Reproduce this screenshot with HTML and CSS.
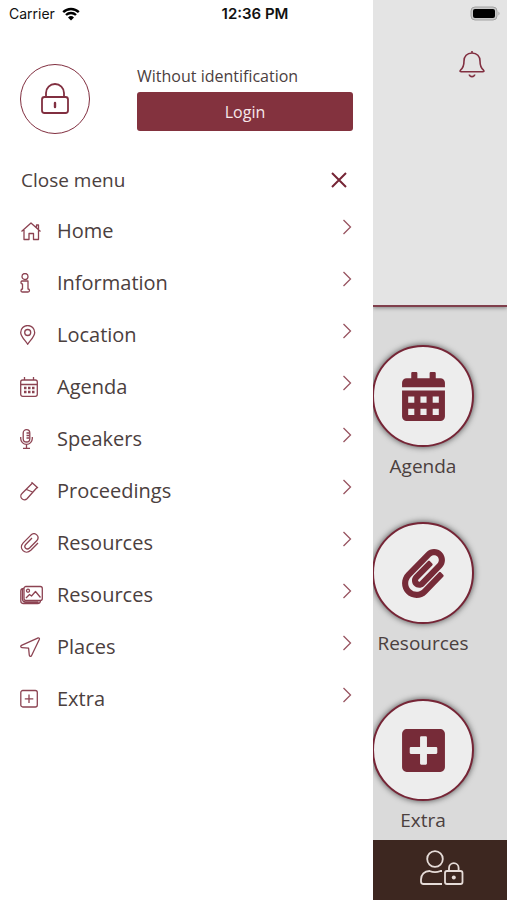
FILE: index.html
```html
<!DOCTYPE html>
<html lang="en">
<head>
<meta charset="utf-8">
<meta name="viewport" content="width=device-width, initial-scale=1">
<title>Menu</title>
<link rel="stylesheet" href="styles.css">
</head>
<body>
<svg class="sprite" aria-hidden="true">
  <symbol id="chevron" viewBox="0 0 10 16"><path d="M1.5 1 8.5 8l-7 7"/></symbol>
</svg>
<div class="screen">
  <header class="status">
    <div class="status-carrier">
      <span>Carrier</span>
      <svg width="18" height="14" viewBox="0 0 18 14" aria-hidden="true">
        <path class="wifi-arc" d="M1.2 5.1a11.2 11.2 0 0 1 15.6 0M4 8a7.2 7.2 0 0 1 10 0"/>
        <path d="M9 13.6 6 10.5a4.3 4.3 0 0 1 6 0z"/>
      </svg>
    </div>
    <time class="status-time">12:36 PM</time>
    <svg class="battery" width="31" height="16" viewBox="0 0 31 16" aria-hidden="true">
      <rect class="battery-case" x="1" y="1" width="26" height="13" rx="4"/>
      <rect x="3" y="3" width="22" height="9" rx="2"/>
      <path class="battery-tip" d="M28.5 5.5q2 2 0 4z"/>
    </svg>
  </header>

  <aside class="drawer">
    <section class="account">
      <span class="avatar">
        <svg width="30" height="34" viewBox="0 0 30 34" aria-hidden="true">
          <rect x="2" y="15" width="26" height="16" rx="2.5"/>
          <path d="M6 15v-4a9 9 0 0 1 18 0v4"/>
          <path class="keyhole" d="M15 21v4"/>
        </svg>
      </span>
      <div class="account-body">
        <p>Without identification</p>
        <button class="login" type="button">Login</button>
      </div>
    </section>

    <button class="close" type="button">
      <span>Close menu</span>
      <svg width="16" height="16" viewBox="0 0 16 16" aria-hidden="true"><path d="m1 1 14 14M15 1 1 15"/></svg>
    </button>

    <nav>
      <ul class="menu">
        <li><a href="#home">
          <svg class="icon" viewBox="0 0 24 20" aria-hidden="true"><path d="M1.500 10.500 11 2l9.500 8.500M16.500 6.800V4h2v4.800M4 9v9.500h5v-6h4.500v6h5V9"/></svg>
          <span>Home</span><svg class="chevron"><use href="#chevron"/></svg></a></li>
        <li><a href="#information">
          <svg class="icon" viewBox="0 0 24 20" aria-hidden="true"><circle cx="5" cy="3.500" r="3"/><path d="M2 8h6v8q1.500 0 1.500 1.500T8 19H2.500Q1 19 1 17.500T2.500 16v-5Q1 11 1 9.500T2 8z"/></svg>
          <span>Information</span><svg class="chevron"><use href="#chevron"/></svg></a></li>
        <li><a href="#location">
          <svg class="icon" viewBox="0 0 24 20" aria-hidden="true"><path d="M7.700 19.300C6 16 .7 12 .7 7.500a7 7 0 0 1 14 0C14.700 12 9.400 16 7.700 19.300z"/><circle cx="7.700" cy="7.500" r="3"/></svg>
          <span>Location</span><svg class="chevron"><use href="#chevron"/></svg></a></li>
        <li><a href="#agenda">
          <svg class="icon" viewBox="0 0 24 20" aria-hidden="true"><rect x=".7" y="3" width="16.600" height="16.300" rx="2"/><path d="M.7 7.500h16.600M4.500 0v3M13.500 0v3"/><path class="dots" d="M4 11h2.500M8 11h2.500M12 11h2.500M4 15h2.500M8 15h2.500M12 15h2.500"/></svg>
          <span>Agenda</span><svg class="chevron"><use href="#chevron"/></svg></a></li>
        <li><a href="#speakers">
          <svg class="icon" viewBox="0 0 24 20" aria-hidden="true"><rect x="3.200" y=".7" width="6.600" height="12.300" rx="3.300"/><path d="M.7 8v1.500a5.800 5.800 0 0 0 11.600 0V8M6.500 15.500v3.800M3 19.300h7M6.500 4h3M6.500 6.500h3M6.500 9h3"/></svg>
          <span>Speakers</span><svg class="chevron"><use href="#chevron"/></svg></a></li>
        <li><a href="#proceedings">
          <svg class="icon" viewBox="0 0 24 20" aria-hidden="true"><path d="m11.500 1.200 6.500 5.800M12.500 2 2 12.500a3.600 3.600 0 0 0 5 5.300L17 6.500M6.500 8.500l6 2.500"/></svg>
          <span>Proceedings</span><svg class="chevron"><use href="#chevron"/></svg></a></li>
        <li><a href="#resources">
          <svg class="icon" viewBox="0 0 24 20" aria-hidden="true"><path d="m18 10-7.200 7.300c-5.400 5.200-12.800-1.800-7.600-7.400l7.700-7.800c4-3.700 9.600 1.200 5.800 5.700L9.500 15c-2.800 2.600-6.200-.8-3.800-3.500L12 5"/></svg>
          <span>Resources</span><svg class="chevron"><use href="#chevron"/></svg></a></li>
        <li><a href="#gallery">
          <svg class="icon" viewBox="0 0 24 20" aria-hidden="true"><rect x="4" y="1.500" width="18.300" height="14" rx="2"/><path d="M4 3.500Q.8 3.500.8 6v10q0 2.500 2.700 2.500h14q3 0 3-3M2.500 4v10q0 3 3 3h13M6 13l3.500-3.500 2 1.500L15.500 6.500l5 6"/><circle cx="8" cy="5.700" r="1.500"/></svg>
          <span>Resources</span><svg class="chevron"><use href="#chevron"/></svg></a></li>
        <li><a href="#places">
          <svg class="icon" viewBox="0 0 24 20" aria-hidden="true"><path d="M18.200.9 1.500 8.400c-1.200.6-.9 2.200.4 2.300l6.700.5.700 7c.2 1.300 1.800 1.500 2.300.3L19.400 2.200q.2-1.400-1.200-1.300z"/></svg>
          <span>Places</span><svg class="chevron"><use href="#chevron"/></svg></a></li>
        <li><a href="#extra">
          <svg class="icon" viewBox="0 0 24 20" aria-hidden="true"><rect x=".8" y="1.500" width="16.500" height="16.500" rx="2"/><path d="M9 5.500v8.500M4.800 9.800h8.500"/></svg>
          <span>Extra</span><svg class="chevron"><use href="#chevron"/></svg></a></li>
      </ul>
    </nav>
  </aside>

  <main class="app">
    <div class="hero">
      <button class="bell" type="button" aria-label="Notifications">
        <svg width="26" height="28" viewBox="0 0 26 28" aria-hidden="true"><path d="M13 1v2M13 3c-5 0-8 3.500-8 8 0 5-1.500 7.500-3.500 9.200-.9.900-.4 1.500.8 1.500h21.400c1.200 0 1.700-.6.800-1.500C22.500 18.500 21 16 21 11c0-4.500-3-8-8-8zM10.300 24.500c.3 2.800 5.100 2.800 5.400 0"/></svg>
      </button>
    </div>
    <div class="tiles">
      <a class="tile" href="#agenda">
        <span class="disc"><svg viewBox="0 0 448 512" aria-hidden="true"><path fill-rule="evenodd" d="M0 192h448v272a48 48 0 0 1-48 48H48a48 48 0 0 1-48-48zM64 256v64h64v-64zm128 0v64h64v-64zm128 0v64h64v-64zM64 384v64h64v-64zm128 0v64h64v-64zm128 0v64h64v-64z"/><path d="M448 160H0v-48a48 48 0 0 1 48-48h48V12a12 12 0 0 1 12-12h40a12 12 0 0 1 12 12v52h128V12a12 12 0 0 1 12-12h40a12 12 0 0 1 12 12v52h48a48 48 0 0 1 48 48z"/></svg></span>
        <span>Agenda</span>
      </a>
      <a class="tile" href="#resources">
        <span class="disc"><svg viewBox="0 0 448 512" aria-hidden="true"><path d="M43.246 466.142c-58.43-60.289-57.341-157.511 1.386-217.581L254.392 34c44.316-45.332 116.351-45.336 160.671 0 43.89 44.894 43.943 117.329 0 162.276L232.214 383.128c-29.855 30.537-78.633 30.111-107.982-.998-28.275-29.97-27.368-77.473 1.452-106.953l143.743-146.835c6.182-6.314 16.312-6.422 22.626-.241l22.861 22.379c6.315 6.182 6.422 16.312.241 22.626L171.427 319.927c-4.932 5.045-5.236 13.428-.648 18.292 4.372 4.634 11.245 4.711 15.688.165l182.849-186.851c19.613-20.062 19.613-52.725-.011-72.798-19.189-19.627-49.957-19.637-69.154 0L90.39 293.295c-34.763 35.56-35.299 93.12-1.191 128.313 34.01 35.093 88.985 35.137 123.058.286l172.06-175.999c6.177-6.319 16.307-6.433 22.626-.256l22.877 22.364c6.319 6.177 6.434 16.307.256 22.626l-172.06 175.998c-59.576 60.938-155.943 60.216-214.77-.485z"/></svg></span>
        <span>Resources</span>
      </a>
      <a class="tile" href="#extra">
        <span class="disc"><svg viewBox="0 0 448 512" aria-hidden="true"><path fill-rule="evenodd" d="M48 32h352a48 48 0 0 1 48 48v352a48 48 0 0 1-48 48H48a48 48 0 0 1-48-48V80a48 48 0 0 1 48-48zM200 108a12 12 0 0 0-12 12v100H92a12 12 0 0 0-12 12v48a12 12 0 0 0 12 12h96v100a12 12 0 0 0 12 12h48a12 12 0 0 0 12-12V292h96a12 12 0 0 0 12-12v-48a12 12 0 0 0-12-12h-96V120a12 12 0 0 0-12-12z"/></svg></span>
        <span>Extra</span>
      </a>
    </div>
    <footer class="tabbar">
      <button type="button" aria-label="Account">
        <svg width="44" height="36" viewBox="0 0 44 36" aria-hidden="true"><circle cx="15" cy="9" r="7.800"/><path d="M22 34H3.500Q1 34 1 31.500v-2C1 24.500 4.500 21 9.500 21c3 1.300 8 1.300 11 0h1.500"/><rect x="25" y="21" width="17.500" height="13" rx="2"/><path d="M29 21v-3a4.800 4.800 0 0 1 9.600 0v3"/><circle class="lock-dot" cx="33.800" cy="27.500" r="2"/></svg>
      </button>
    </footer>
  </main>
</div>
</body>
</html>
```
FILE: styles.css
```css
:root {
  --wine: #812f40;
  --wine-dark: #762536;
  --ink: #4b403e;
}

* {
  box-sizing: border-box;
}

body {
  margin: 0;
  color: var(--ink);
  font-family: "Open Sans", "Noto Sans", sans-serif;
  font-size: 19px;
  line-height: 28px;
}

button {
  border: 0;
  padding: 0;
  background: none;
  color: inherit;
  font: inherit;
  cursor: pointer;
}

a {
  color: inherit;
  text-decoration: none;
}

svg {
  flex: none;
  display: block;
}

.sprite {
  position: absolute;
  width: 0;
  height: 0;
}

.screen {
  position: relative;
  display: grid;
  grid-template-columns: 373fr 134fr;
  min-height: 100vh;
  overflow: hidden;
}

/* Status bar, over both panes */
.status {
  position: absolute;
  inset: 0 0 auto;
  z-index: 3;
  display: grid;
  grid-template-columns: 1fr auto 1fr;
  align-items: center;
  padding: 4px 6px 0 9px;
  color: #111;
  font-family: Inter, "Liberation Sans", sans-serif;
  font-size: 14px;
  line-height: 20px;
}

.status-carrier {
  display: flex;
  align-items: center;
  gap: 7px;
}

.wifi-arc {
  fill: none;
  stroke: #000;
  stroke-width: 2.4;
}

.status-time {
  font-size: 15px;
  font-weight: 600;
}

.battery {
  justify-self: end;
}

.battery-case {
  fill: #c9c9c9;
  stroke: #a2a2a2;
}

.battery-tip {
  fill: #999;
}

/* Drawer */
.drawer {
  position: relative;
  z-index: 2;
  padding: 64px 20px 0;
  background: #fff;
}

.account {
  display: flex;
  align-items: flex-start;
  gap: 47px;
}

.avatar {
  flex: none;
  display: grid;
  place-items: center;
  width: 70px;
  height: 70px;
  border: 1px solid var(--wine);
  border-radius: 50%;
}

.avatar svg {
  fill: none;
  stroke: var(--wine);
  stroke-width: 1.8;
}

.avatar .keyhole {
  stroke-width: 2.4;
  stroke-linecap: round;
}

.account-body {
  flex: 1;
  font-size: 16px;
  line-height: 24px;
}

.account-body p {
  margin: 0 0 4px;
}

.login {
  width: 100%;
  height: 39px;
  border-radius: 3px;
  background: #83323e;
  color: #f7e9ea;
}

.close {
  display: flex;
  align-items: center;
  justify-content: space-between;
  width: 100%;
  margin-top: 32px;
  padding: 0 6px 0 1px;
}

.close svg {
  fill: none;
  stroke: var(--wine-dark);
  stroke-width: 2;
}

.menu {
  margin: 11px 0 0;
  padding: 0;
  list-style: none;
  font-size: 20px;
}

.menu a {
  display: flex;
  align-items: center;
  height: 52px;
  padding-right: 1px;
}

.icon {
  width: 24px;
  height: 20px;
  margin-right: 13px;
  fill: none;
  stroke: #8c4352;
  stroke-width: 1.3;
  stroke-linejoin: round;
}

.icon .dots {
  stroke-width: 2.4;
}

.chevron {
  width: 10px;
  height: 16px;
  margin: 0 0 8px auto;
  fill: none;
  stroke: #985460;
  stroke-width: 1.3;
}

/* App behind the drawer */
.app {
  display: flex;
  flex-direction: column;
  min-width: 0;
  background: #dadada;
}

.hero {
  display: flex;
  justify-content: flex-end;
  align-items: flex-start;
  height: 307px;
  padding: 50px 22px 0;
  border-bottom: 2px solid #803f4c;
  background: #e4e4e4;
  box-shadow: 0 1px 4px #0006;
}

.bell svg {
  fill: none;
  stroke: var(--wine);
  stroke-width: 1.6;
}

.tiles {
  flex: 1;
  display: flex;
  flex-direction: column;
  align-items: flex-start;
  gap: 42px;
  padding-top: 38px;
}

.tile {
  display: flex;
  flex-direction: column;
  align-items: center;
  gap: 5px;
  margin-left: -1px;
}

.disc {
  display: grid;
  place-items: center;
  width: 102px;
  height: 102px;
  border: 2px solid var(--wine-dark);
  border-radius: 50%;
  background: #ededed;
  box-shadow: 0 0 6px #000a;
}

.disc svg {
  width: 43px;
  height: 49px;
  fill: #762b38;
}

.tabbar {
  display: flex;
  justify-content: center;
  align-items: center;
  height: 60px;
  padding: 0 0 4px 4px;
  background: #3d2720;
}

.tabbar svg {
  fill: none;
  stroke: #e6dcd8;
  stroke-width: 1.8;
}

.tabbar .lock-dot {
  fill: #e6dcd8;
  stroke: none;
}
```
